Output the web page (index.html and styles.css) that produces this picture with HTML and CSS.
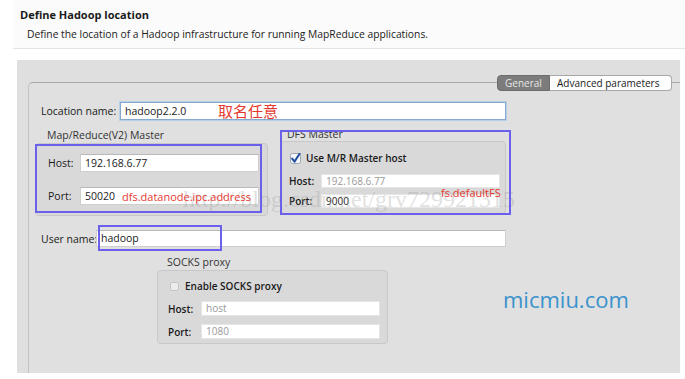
FILE: index.html
```html
<!DOCTYPE html>
<html lang="en">
<head>
    <meta charset="UTF-8">
    <title>Define Hadoop location</title>
    <link rel="stylesheet" href="styles.css">
</head>
<body>

<div class="page">

    <!-- Kopfbereich -->
    <div class="head">
        <div class="title">Define Hadoop location</div>
        <div class="desc">Define the location of a Hadoop infrastructure for running MapReduce applications.</div>
    </div>

    <div class="main">
        <div class="tabs">
            <span class="tab on">General</span>
            <span class="tab">Advanced parameters</span>
        </div>

        <div class="panel">
            <div class="row loc">
                <span class="lbl">Location name:</span>
                <div class="field focus">hadoop2.2.0</div>
            </div>

            <div class="groups">
                <div class="group mr">
                    <div class="legend">Map/Reduce(V2) Master</div>
                    <div class="box">
                        <div class="frow"><span class="flbl">Host:</span><div class="field">192.168.6.77</div></div>
                        <div class="frow"><span class="flbl">Port:</span><div class="field">50020</div></div>
                    </div>
                </div>

                <div class="group dfs">
                    <div class="legend">DFS Master</div>
                    <div class="box">
                        <div class="check">
                            <svg class="cb" width="11" height="11" viewBox="0 0 11 11">
                                <rect x="0.5" y="0.5" width="10" height="10" rx="2" fill="#f4f6fa" stroke="#9aa6b4"/>
                                <path d="M2.2 5.6 L4.5 8.6 L9.6 0.8" fill="none" stroke="#1f4f9c" stroke-width="2" stroke-linecap="round" stroke-linejoin="round"/>
                            </svg>
                            <span>Use M/R Master host</span>
                        </div>
                        <div class="frow"><span class="flbl bold">Host:</span><div class="field small dim">192.168.6.77</div></div>
                        <div class="frow"><span class="flbl bold">Port:</span><div class="field small">9000</div></div>
                    </div>
                </div>
            </div>

            <div class="row user">
                <span class="lbl">User name:</span>
                <div class="field">hadoop</div>
            </div>

            <div class="group socks">
                <div class="legend">SOCKS proxy</div>
                <div class="box">
                    <div class="check">
                        <svg class="cb" width="9" height="9" viewBox="0 0 9 9">
                            <rect x="0.5" y="0.5" width="8" height="8" rx="1.5" fill="#ececec" stroke="#c4c4c4"/>
                        </svg>
                        <span>Enable SOCKS proxy</span>
                    </div>
                    <div class="frow"><span class="flbl bold">Host:</span><div class="field small dim">host</div></div>
                    <div class="frow"><span class="flbl bold">Port:</span><div class="field small dim">1080</div></div>
                </div>
            </div>
        </div>
    </div>

    <!-- Markierungen über dem Screenshot -->
    <div class="wm">http://blog.csdn.net/grv729921315</div>
    <div class="mark m-mr"></div>
    <div class="mark m-dfs"></div>
    <div class="mark m-user"></div>
    <div class="note n-name">取名任意</div>
    <div class="note n-ipc">dfs.datanode.ipc.address</div>
    <div class="note n-fs">fs.defaultFS</div>
    <div class="site">micmiu.com</div>
</div>

</body>
</html>
```
FILE: styles.css
```css
body {
    margin: 0;
    background: #ffffff;
    font-family: "Open Sans", "DejaVu Sans", sans-serif;
    font-size: 10.5px;
    color: #1a1a1a;
}

.page {
    position: relative;
    width: 685px;
    height: 379px;
    overflow: hidden;
    white-space: nowrap;
}

/* Kopfbereich */
.head {
    margin-left: 13px;
    height: 48px;
    border-bottom: 1px solid #e4e4e4;
    background: #fbfbfb;
}

.title {
    padding: 8px 0 0 7px;
    font-weight: 700;
    font-size: 11px;
    line-height: 14px;
}

.desc {
    padding: 5px 0 0 14px;
    line-height: 14px;
    font-size: 10.3px;
}

/* grauer Dialogbereich */
.main {
    display: flex;
    flex-direction: column;
    margin: 11px 0 0 17px;
    width: 663px;
    height: 313px;
    padding-top: 15px;
    box-sizing: border-box;
    background: #dfdfdf;
}

.tabs {
    display: flex;
    justify-content: flex-end;
    margin-right: 8px;
    position: relative;
    z-index: 1;
}

.tab {
    height: 16px;
    line-height: 14px;
    padding: 0 7px;
    background: #fdfdfd;
    border: 1px solid #a8a8a8;
    border-left: none;
    border-radius: 0 4px 4px 0;
    box-sizing: border-box;
    width: 122px;
    font-size: 10px;
}

.tab.on {
    width: 53px;
    background: #7c7c7c;
    color: #e6e6e6;
    border: 1px solid #6c6c6c;
    border-radius: 4px 0 0 4px;
    text-align: center;
    padding: 0;
}

.panel {
    flex: 1;
    margin: -9px 0 0 11px;
    border-top: 1px solid #a9a9a9;
    border-left: 1px solid #c3c3c3;
    border-top-left-radius: 5px;
    padding: 19px 0 0 6px;
    background: #e0e0e0;
}

.row {
    display: flex;
    align-items: center;
    padding-left: 6px;
}

.lbl {
    width: 79px;
}

.user .lbl {
    width: 55px;
}

.field {
    height: 18px;
    line-height: 16px;
    padding-left: 4px;
    box-sizing: border-box;
    background: #ffffff;
    border: 1px solid #cfcfcf;
    border-top-color: #b9b9b9;
    width: 179px;
}

.loc .field {
    width: 386px;
}

.field.focus {
    border: 1px solid #86a9cc;
    box-shadow: 0 0 0 1px #b7d0ea;
}

.user {
    margin-top: 14px;
}

.user .field {
    width: 410px;
    height: 17px;
    line-height: 15px;
}

.field.small {
    height: 14px;
    line-height: 12px;
    border-color: #e6e6e6;
    font-size: 10px;
}

.dim {
    color: #9a9a9a;
}

/* Gruppenboxen */
.groups {
    display: flex;
    align-items: flex-start;
    margin-top: 9px;
}

.legend {
    line-height: 13px;
    padding-left: 12px;
    margin-bottom: 1px;
    color: #333;
}

.box {
    box-sizing: border-box;
    border: 1px solid #c8c8c8;
    border-radius: 4px;
    background: #d9d9d9;
}

.mr .box {
    width: 233px;
    height: 73px;
    padding: 10px 0 0 12px;
}

.mr .frow + .frow {
    margin-top: 15px;
}

.frow {
    display: flex;
    align-items: center;
}

.flbl {
    width: 32px;
}

.bold {
    font-weight: 600;
    font-size: 10px;
}

.dfs {
    margin-left: 12px;
}

.dfs .legend {
    line-height: 11px;
    padding-left: 7px;
}

.dfs .box {
    width: 226px;
    height: 73px;
    padding: 9px 0 0 8px;
}

.check {
    display: flex;
    align-items: center;
    height: 14px;
    font-weight: 600;
    font-size: 10px;
}

.check .cb {
    margin: 0 5px 0 1px;
}

.dfs .check {
    margin-bottom: 9px;
}

.dfs .frow + .frow {
    margin-top: 6px;
}

.socks {
    margin: 9px 0 0 122px;
}

.socks .legend {
    padding-left: 10px;
}

.socks .box {
    width: 231px;
    height: 74px;
    padding: 8px 0 0 10px;
}

.socks .check {
    margin-bottom: 8px;
}

.socks .check .cb {
    margin: 0 6px 0 2px;
}

.socks .flbl {
    width: 33px;
}

.socks .frow + .frow {
    margin-top: 8px;
}

.socks .field.small {
    height: 15px;
}

/* Markierungen */
.mark {
    position: absolute;
    border: 2px solid #6a60ec;
    box-sizing: border-box;
}

.m-mr { left: 35px; top: 144px; width: 227px; height: 69px; }
.m-dfs { left: 280px; top: 130px; width: 231px; height: 85px; }
.m-user { left: 98px; top: 225px; width: 124px; height: 26px; }

.note {
    position: absolute;
    color: #e5392f;
}

.n-name {
    left: 218px;
    top: 101px;
    font-family: "Noto Sans CJK SC", sans-serif;
    font-size: 15px;
    line-height: 20px;
}

.n-ipc { left: 122px; top: 189px; font-size: 11px; line-height: 16px; }
.n-fs { left: 441px; top: 185px; font-size: 11px; line-height: 16px; }

.wm {
    position: absolute;
    left: 183px;
    top: 184px;
    font-family: "Liberation Serif", serif;
    font-size: 24px;
    line-height: 30px;
    color: rgba(150, 150, 150, 0.3);
}

.site {
    position: absolute;
    left: 503px;
    top: 284px;
    font-size: 22px;
    line-height: 30px;
    color: #3a93cd;
}
```
